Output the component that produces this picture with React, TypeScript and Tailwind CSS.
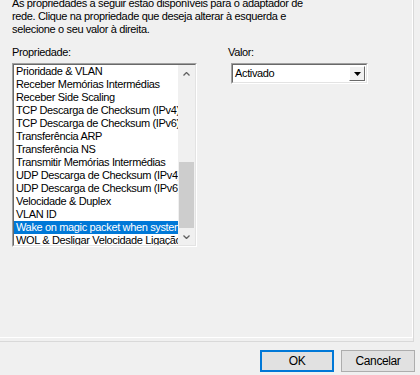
const items = [
  "Prioridade & VLAN",
  "Receber Memórias Intermédias",
  "Receber Side Scaling",
  "TCP Descarga de Checksum (IPv4)",
  "TCP Descarga de Checksum (IPv6)",
  "Transferência ARP",
  "Transferência NS",
  "Transmitir Memórias Intermédias",
  "UDP Descarga de Checksum (IPv4)",
  "UDP Descarga de Checksum (IPv6)",
  "Velocidade & Duplex",
  "VLAN ID",
  "Wake on magic packet when system is in the S0ix power state",
  "WOL & Desligar Velocidade Ligação",
];

const selected = "Wake on magic packet when system is in the S0ix power state";

function Chevron({ up }: { up?: boolean }) {
  return (
    <svg width="7" height="4" viewBox="0 0 7 4" className="block">
      <polyline
        points={up ? "0.5,3.5 3.5,0.5 6.5,3.5" : "0.5,0.5 3.5,3.5 6.5,0.5"}
        fill="none"
        stroke="#606060"
        strokeWidth="1.3"
      />
    </svg>
  );
}

function Sunken({ className, children }: { className: string; children: React.ReactNode }) {
  return (
    <div className={`border border-t-[#a0a0a0] border-l-[#a0a0a0] border-b-white border-r-white ${className}`}>
      <div className="h-full w-full border border-t-[#696969] border-l-[#696969] border-b-[#e3e3e3] border-r-[#e3e3e3] bg-white">
        {children}
      </div>
    </div>
  );
}

export default function App() {
  return (
    <div className="w-[420px] h-[375px] bg-[#f0f0f0] overflow-hidden text-black font-['Liberation_Sans',Arial,sans-serif] text-[11px] tracking-[-0.35px]">
      {/* tab page */}
      <div className="w-[414px] h-[342px] border-r border-b border-[#d9d9d9] overflow-hidden">
        <div className="h-full w-full border-r border-b border-white px-[12px]">
          <p className="-mt-[3px] leading-[13px] whitespace-nowrap">
            As propriedades a seguir estão disponíveis para o adaptador de
            <br />
            rede. Clique na propriedade que deseja alterar à esquerda e
            <br />
            selecione o seu valor à direita.
          </p>

          <div className="flex mt-[10px]">
            {/* left column */}
            <div className="w-[185px]">
              <div className="leading-[13px]">Propriedade:</div>
              <Sunken className="mt-[4px] h-[184px]">
                <div className="flex h-full overflow-hidden">
                  <div className="flex-1 overflow-hidden">
                    {items.map((it) => (
                      <div
                        key={it}
                        className={`h-[13px] leading-[13px] pl-[2px] whitespace-nowrap ${
                          it === selected ? "bg-[#0078d7] text-white" : ""
                        }`}
                      >
                        {it}
                      </div>
                    ))}
                  </div>
                  <div className="w-[17px] bg-[#f0f0f0] flex flex-col">
                    <div className="h-[17px] flex items-center justify-center">
                      <Chevron up />
                    </div>
                    <div className="flex-1 flex flex-col justify-end px-[1px]">
                      <div className="h-[66px] bg-[#cdcdcd]" />
                    </div>
                    <div className="h-[17px] flex items-center justify-center">
                      <Chevron />
                    </div>
                  </div>
                </div>
              </Sunken>
            </div>

            {/* right column */}
            <div className="ml-[31px]">
              <div className="leading-[13px]">Valor:</div>
              <Sunken className="mt-[4px] ml-[3px] w-[137px] h-[21px]">
                <div className="flex items-center h-full pl-[2px] pr-[1px]">
                  <span className="flex-1 leading-[13px]">Activado</span>
                  <div className="w-[16px] h-[15px] border border-t-white border-l-white border-b-[#696969] border-r-[#696969] bg-[#f0f0f0] flex items-center justify-center">
                    <svg width="7" height="4" viewBox="0 0 7 4" className="block">
                      <polygon points="0,0 7,0 3.5,4" fill="#000" />
                    </svg>
                  </div>
                </div>
              </Sunken>
            </div>
          </div>
        </div>
      </div>

      {/* buttons */}
      <div className="flex justify-end gap-[7px] pr-[5px] mt-[8px]">
        <button className="w-[74px] h-[22px] border-2 border-[#0078d7] bg-[#e1e1e1] text-[12px] tracking-[-0.4px] leading-none">
          OK
        </button>
        <button className="w-[74px] h-[22px] border border-[#adadad] bg-[#e1e1e1] text-[12px] tracking-[-0.4px] leading-none">
          Cancelar
        </button>
      </div>
    </div>
  );
}
